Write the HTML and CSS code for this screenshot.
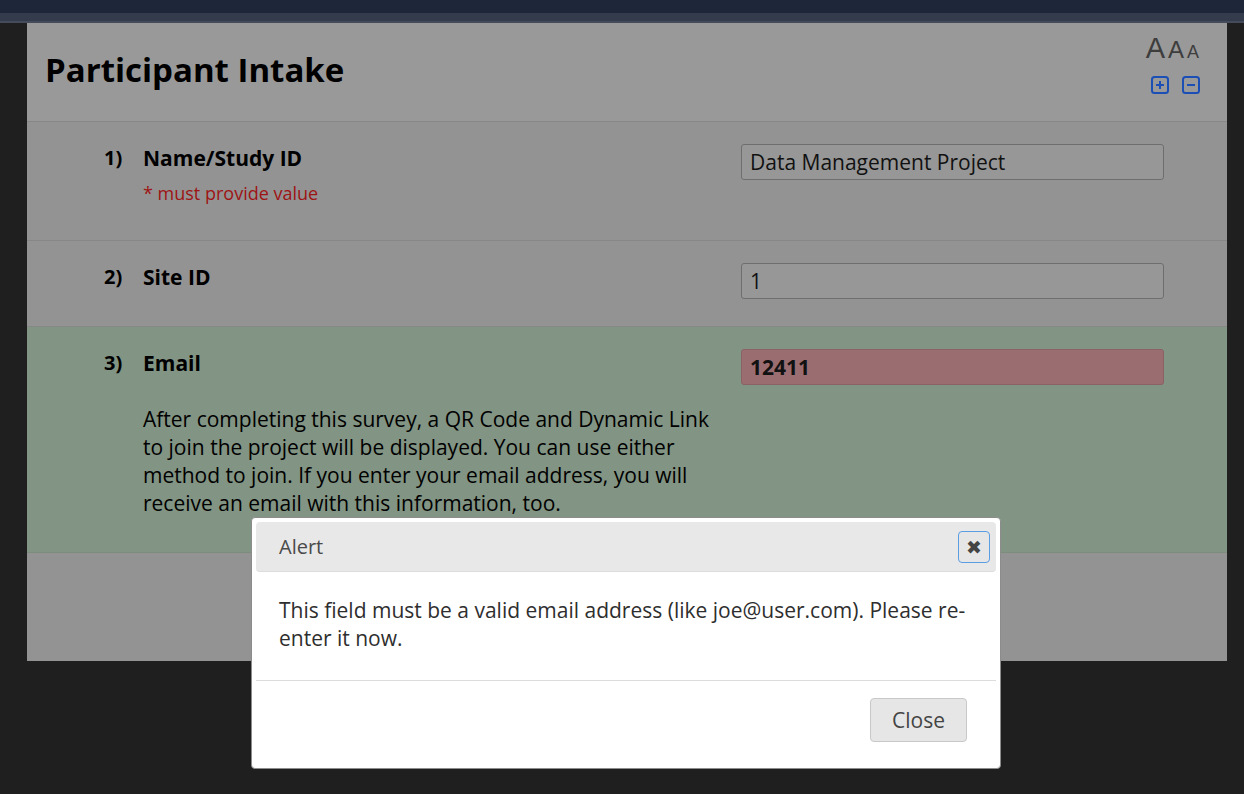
FILE: index.html
```html
<!DOCTYPE html>
<html lang="en">
<head>
<meta charset="utf-8">
<title>Participant Intake</title>
<link rel="stylesheet" href="styles.css">
</head>
<body>
<div class="topbar"></div>
<div class="subbar"></div>
<main class="card">
  <header class="card-head">
    <h1 class="title">Participant Intake</h1>
    <div class="font-tools">
      <div class="aaa"><span class="a1">A</span><span class="a2">A</span><span class="a3">A</span></div>
      <div class="zoom-btns">
        <svg class="zbtn" viewBox="0 0 18 18" width="18" height="18"><rect x="1" y="1" width="16" height="16" rx="2.5" fill="none" stroke="currentColor" stroke-width="2"/><path d="M9 5v8M5 9h8" stroke="currentColor" stroke-width="2"/></svg>
        <svg class="zbtn" viewBox="0 0 18 18" width="18" height="18"><rect x="1" y="1" width="16" height="16" rx="2.5" fill="none" stroke="currentColor" stroke-width="2"/><path d="M5 9h8" stroke="currentColor" stroke-width="2"/></svg>
      </div>
    </div>
  </header>

  <section class="row">
    <div class="num">1)</div>
    <div class="label">
      <div class="qtext">Name/Study ID</div>
      <div class="req">* must provide value</div>
    </div>
    <div class="field"><div class="input">Data Management Project</div></div>
  </section>

  <section class="row">
    <div class="num">2)</div>
    <div class="label"><div class="qtext">Site ID</div></div>
    <div class="field"><div class="input">1</div></div>
  </section>

  <section class="row row-green">
    <div class="num">3)</div>
    <div class="label">
      <div class="qtext">Email</div>
      <p class="note">After completing this survey, a QR Code and Dynamic Link<br>to join the project will be displayed. You can use either<br>method to join. If you enter your email address, you will<br>receive an email with this information, too.</p>
    </div>
    <div class="field"><div class="input input-bad">12411</div></div>
  </section>

  <div class="card-foot"></div>
</main>

<div class="modal" role="dialog">
  <div class="modal-head">
    <span class="modal-title">Alert</span>
    <button class="xbtn" type="button" aria-label="close">&#x2716;</button>
  </div>
  <div class="modal-body">This field must be a valid email address (like joe@user.com). Please re-enter it now.</div>
  <div class="modal-foot"><button class="close-btn" type="button">Close</button></div>
</div>
</body>
</html>
```

FILE: styles.css
```css
html, body {
  margin: 0;
  padding: 0;
}
body {
  background: #1f1f1f;
  font-family: "Open Sans", "Noto Sans", sans-serif;
  color: #000;
  width: 1244px;
  height: 794px;
  overflow: hidden;
  position: relative;
}
.topbar {
  height: 13px;
  background: #1e2639;
}
.subbar {
  height: 8px;
  background: #333b4d;
  border-bottom: 2px solid #444b5a;
}
.card {
  width: 1200px;
  margin-left: 27px;
  background: #939393;
}
.card-head {
  height: 98px;
  background: #999999;
  border-bottom: 1px solid #878787;
  display: flex;
  align-items: center;
  justify-content: space-between;
  padding: 0 28px 0 18px;
}
.title {
  margin: 0 0 5px;
  font-size: 33px;
  font-weight: 700;
  color: #000;
}
.font-tools {
  display: flex;
  flex-direction: column;
  align-items: flex-end;
  align-self: flex-start;
  padding-top: 11px;
}
.aaa {
  font-family: "Liberation Sans", Arial, sans-serif;
  color: #3d3d3d;
  display: flex;
  align-items: baseline;
  line-height: 28px;
  gap: 3px;
}
.a1 { font-size: 29px; }
.a2 { font-size: 24px; }
.a3 { font-size: 18px; }
.zoom-btns {
  display: flex;
  gap: 13px;
  margin-top: 10px;
  margin-right: -1px;
}
.zbtn {
  color: #1c4fb6;
  display: block;
}
.row {
  display: grid;
  grid-template-columns: 39px 598px 423px;
  padding: 22px 63px 27px 77px;
  border-bottom: 1px solid #878787;
  background: #939393;
}
.row-green {
  background: #829483;
  border-bottom-color: #7c8c7d;
}
.label {
  padding: 0 21px 8px 0;
}
.num {
  font-size: 20px;
  font-weight: 700;
  line-height: 28px;
}
.qtext {
  font-size: 21px;
  font-weight: 700;
  line-height: 28px;
}
.req {
  font-size: 18px;
  line-height: 24px;
  color: #9e1414;
  margin-top: 9px;
}
.note {
  margin: 28px 0 0;
  font-size: 21px;
  line-height: 28px;
  color: #000;
  white-space: nowrap;
}
.input {
  height: 34px;
  border: 1px solid #6e6e6e;
  border-radius: 3px;
  background: #979797;
  font-size: 21px;
  line-height: 34px;
  padding: 0 8px;
  color: #111;
}
.input-bad {
  background: #9a6d71;
  border-color: #8b6165;
  font-weight: 700;
}
.card-foot {
  height: 108px;
  background: #939393;
}

.modal {
  position: absolute;
  left: 251px;
  top: 517px;
  width: 750px;
  background: #fff;
  border: 1px solid #8c8c8c;
  border-radius: 4px;
  padding: 4px;
  box-sizing: border-box;
}
.modal-head {
  height: 49px;
  background: #e8e8e8;
  border-bottom: 1px solid #dcdcdc;
  border-radius: 4px;
  display: flex;
  align-items: center;
  justify-content: space-between;
  padding: 0 6px 0 23px;
}
.modal-title {
  font-size: 20px;
  color: #4a4a4a;
}
.xbtn {
  width: 32px;
  height: 32px;
  border: 1px solid #5b9de3;
  border-radius: 4px;
  background: #e6e6e6;
  color: #444;
  font-size: 19px;
  padding: 0;
  display: flex;
  align-items: center;
  justify-content: center;
  font-family: "DejaVu Sans", sans-serif;
}
.modal-body {
  padding: 24px 23px 28px;
  font-size: 21px;
  line-height: 28px;
  color: #2e2e2e;
  border-bottom: 1px solid #dcdcdc;
}
.modal-foot {
  display: flex;
  justify-content: flex-end;
  padding: 17px 29px 22px;
}
.close-btn {
  width: 97px;
  height: 44px;
  font-family: inherit;
  font-size: 21px;
  color: #444;
  background: #e6e6e6;
  border: 1px solid #c8c8c8;
  border-radius: 4px;
}
```
